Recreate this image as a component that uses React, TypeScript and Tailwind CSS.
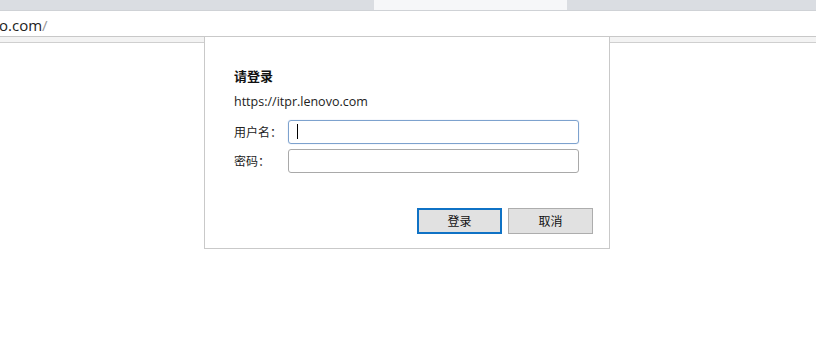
import React from 'react';

const cjk = { fontFamily: '"Noto Sans CJK SC", "Open Sans", sans-serif' };
const latin = { fontFamily: '"Open Sans", "Noto Sans CJK SC", sans-serif' };

export default function App() {
    return (
        <div className="relative w-[816px] h-[340px] bg-white overflow-hidden" style={cjk}>
            {/* tab strip */}
            <div className="flex h-[11px] border-b border-[#cfd2d6]">
                <div className="w-[374px] bg-[#dadde2]" />
                <div className="w-[193px] bg-[#f6f7f9]" />
                <div className="flex-1 bg-[#dadde2]" />
            </div>

            {/* address bar */}
            <div className="flex items-center h-[26px] pt-[3px] border-b border-[#c8c8c8] bg-white">
                <span className="text-[15px] text-[#222] -ml-[1px] leading-none" style={latin}>
                    o.com<span className="text-[#999]">/</span>
                </span>
            </div>

            {/* strip under the bar */}
            <div className="h-[6px] bg-[#f3f3f3] border-b border-[#cfcfcf]" />

            {/* auth dialog */}
            <div className="absolute left-[204px] top-[36px] w-[406px] h-[213px] bg-white border border-[#c9c9c9]">
                <div className="pl-[29px] pr-[16px] pt-[29px]">
                    <h3 className="text-[13px] font-bold text-[#111] leading-[20px]">请登录</h3>
                    <p className="mt-[6px] text-[12.5px] text-[#222] leading-[20px]" style={latin}>https://itpr.lenovo.com</p>

                    <div className="mt-[8px] flex items-center">
                        <span className="w-[54px] text-[12px] text-[#222]">用户名：</span>
                        <div className="relative w-[291px] h-[24px] rounded-[3px] border border-[#7da2ce] shadow-[0_0_1px_#9fbbe0]">
                            <span className="absolute left-[8px] top-[3px] w-[1px] h-[15px] bg-black" />
                        </div>
                    </div>

                    <div className="mt-[5px] flex items-center">
                        <span className="w-[54px] text-[12px] text-[#222]">密码：</span>
                        <div className="w-[291px] h-[24px] rounded-[3px] border border-[#a9a9a9]" />
                    </div>

                    <div className="mt-[35px] flex justify-end gap-[6px]">
                        <button className="w-[85px] h-[26px] bg-[#e1e1e1] border-2 border-[#0f72c5] text-[12px] text-[#111]">登录</button>
                        <button className="w-[85px] h-[26px] bg-[#e1e1e1] border border-[#adadad] text-[12px] text-[#111]">取消</button>
                    </div>
                </div>
            </div>
        </div>
    );
}
